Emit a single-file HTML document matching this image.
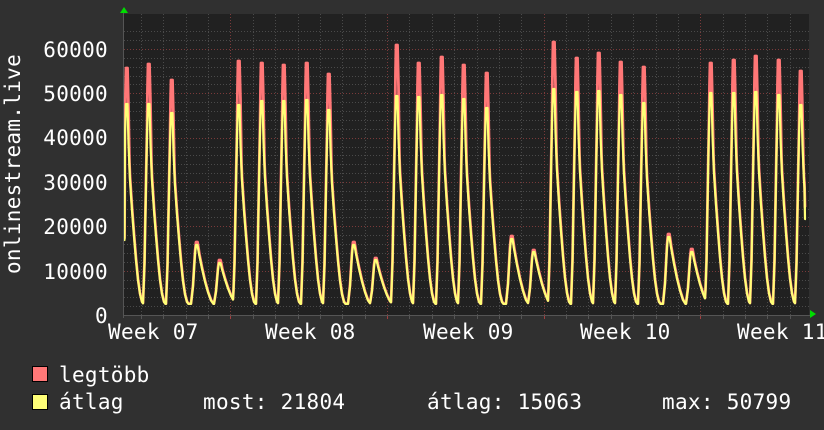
<!DOCTYPE html>
<html><head><meta charset="utf-8"><style>
html,body{margin:0;padding:0;background:#303030;}
body{width:824px;height:430px;overflow:hidden;position:relative;font-family:"DejaVu Sans Mono","Liberation Mono",monospace;color:#fff;}
svg{position:absolute;left:0;top:0}
text{font-family:"DejaVu Sans Mono","Liberation Mono",monospace;font-size:21px;fill:#fff;letter-spacing:0.3px}
</style></head><body>
<svg id="g" width="824" height="430" xmlns="http://www.w3.org/2000/svg">
<rect x="0" y="0" width="824" height="430" fill="#303030"/>
<rect x="124" y="14" width="685" height="301" fill="#212121"/>
<g id="grid"></g>
<path id="red" d="" fill="none" stroke="#ff7777" stroke-width="2.8" stroke-linejoin="round"/>
<path id="yel" d="" fill="none" stroke="#ffff77" stroke-width="2.2" stroke-linejoin="round"/>
<line x1="124" y1="315.5" x2="812" y2="315.5" stroke="#555" stroke-width="1"/>
<line x1="123.5" y1="10" x2="123.5" y2="318" stroke="#555" stroke-width="1"/>
<polygon points="120,13 128,13 124,7" fill="#00dd00"/>
<polygon points="810,310 810,318 816,314" fill="#00dd00"/>
<g text-anchor="end">
<text x="108" y="57">60000</text>
<text x="108" y="101">50000</text>
<text x="108" y="145">40000</text>
<text x="108" y="190">30000</text>
<text x="108" y="234">20000</text>
<text x="108" y="279">10000</text>
<text x="108" y="323">0</text>
</g>
<text x="108" y="339">Week 07</text>
<text x="265" y="339">Week 08</text>
<text x="423" y="339">Week 09</text>
<text x="580" y="339">Week 10</text>
<text x="737" y="339">Week 11</text>
<text transform="translate(20,164) rotate(-90)" text-anchor="middle">onlinestream.live</text>
<rect x="32.5" y="366.5" width="15" height="15" fill="#ff7777" stroke="#000"/>
<rect x="32.5" y="394.5" width="15" height="15" fill="#ffff77" stroke="#000"/>
<text x="59" y="382">legtöbb</text>
<text x="59" y="409">átlag</text>
<text x="203" y="409">most: 21804</text>
<text x="427" y="409">átlag: 15063</text>
<text x="662" y="409">max: 50799</text>
</svg>
<script>
(function(){
var grid=document.getElementById('grid'),s='';
for(var v=2000;v<=64000;v+=2000){var y=315-v*266/60000;if(y<14)break;var maj=v%10000==0;
s+='<line x1="124" x2="809" y1="'+(Math.round(y)+.5)+'" y2="'+(Math.round(y)+.5)+'" stroke="'+(maj?'#7a3a3a':'#4a4a4a')+'" stroke-dasharray="1,2"/>';}
for(var i=0;i<31;i++){var x=141+i*22.37;if(x>809)break;var maj=((i-4)%7==0);var xx=Math.round(x)+.5;
s+='<line y1="14" y2="315" x1="'+xx+'" x2="'+xx+'" stroke="'+(maj?'#7a3a3a':'#4a4a4a')+'" stroke-dasharray="1,2"/>';
s+='<line y1="315" y2="319" x1="'+xx+'" x2="'+xx+'" stroke="'+(maj?'#a04040':'#555')+'"/>';}
grid.innerHTML=s;
var P=[[126,68,104],[148,64,104],[171,80,113],[196,242,245],[219,260,263],[238,61,105],[261,63,101],[283,65,101],[306,63,100],[328,74,110],[353,242,245],[375,258,260],[396,45,96],[418,63,97],[441,57,95],[463,65,99],[486,73,108],[511,236,239],[533,250,252],[553,42,89],[576,58,92],[598,53,91],[620,62,95],[643,67,103],[668,234,237],[691,249,252],[710,63,93],[733,60,93],[755,56,92],[778,60,95],[800,71,105]];
function val(y){return (315-y)*60000/266;}
var MIN=2500;
var SK=[[-5,0],[-3.5,0.2],[-2,0.6],[-1,0.85],[0,1],[1.5,1],[2.5,0.8],[4,0.62],[6,0.47],[8,0.34],[10,0.22],[12,0.12],[14,0.05],[16,0.01],[17.5,0]];
var SKs=[[-5,0],[-3,0.3],[-1,0.85],[0,1],[1.5,1],[3,0.85],[6,0.6],[9,0.38],[12,0.2],[15,0.06],[17.5,0]];
var GK=[[-1,0],[-0.3,1],[2.5,1],[3.5,0]];
function interp(T,t){if(t<=T[0][0]||t>=T[T.length-1][0])return 0;for(var i=1;i<T.length;i++)if(t<=T[i][0]){var a=T[i-1],b=T[i];return a[1]+(b[1]-a[1])*(t-a[0])/(b[0]-a[0]);}return 0;}
function f(x,which){var best=MIN;for(var k=0;k<P.length;k++){var t=x-P[k][0];var Y=val(P[k][2]),R=val(P[k][1]);
 var sh=Y<20000?SKs:SK;var yv=MIN+(Y-MIN)*interp(sh,t);var g=interp(GK,t);var rv=yv+(R-Y)*g+yv*0.03*(1-g);
 var v=which?rv:yv;if(v>best)best=v;}
 return best;}
var dy='',dr='';
for(var x=124;x<=806;x+=0.5){var a=f(x,0),b=Math.max(f(x,1),a);
 if(x<=124.5){a=val(240);b=val(238);}
 if(x>=805){a=val(219);b=val(207);}
 var ya=(315-a*266/60000).toFixed(1),yb=(315-b*266/60000).toFixed(1);
 dy+=(x==124?'M':'L')+x+' '+ya;dr+=(x==124?'M':'L')+x+' '+yb;}
document.getElementById('yel').setAttribute('d',dy);
document.getElementById('red').setAttribute('d',dr);
})();
</script>
</body></html>
